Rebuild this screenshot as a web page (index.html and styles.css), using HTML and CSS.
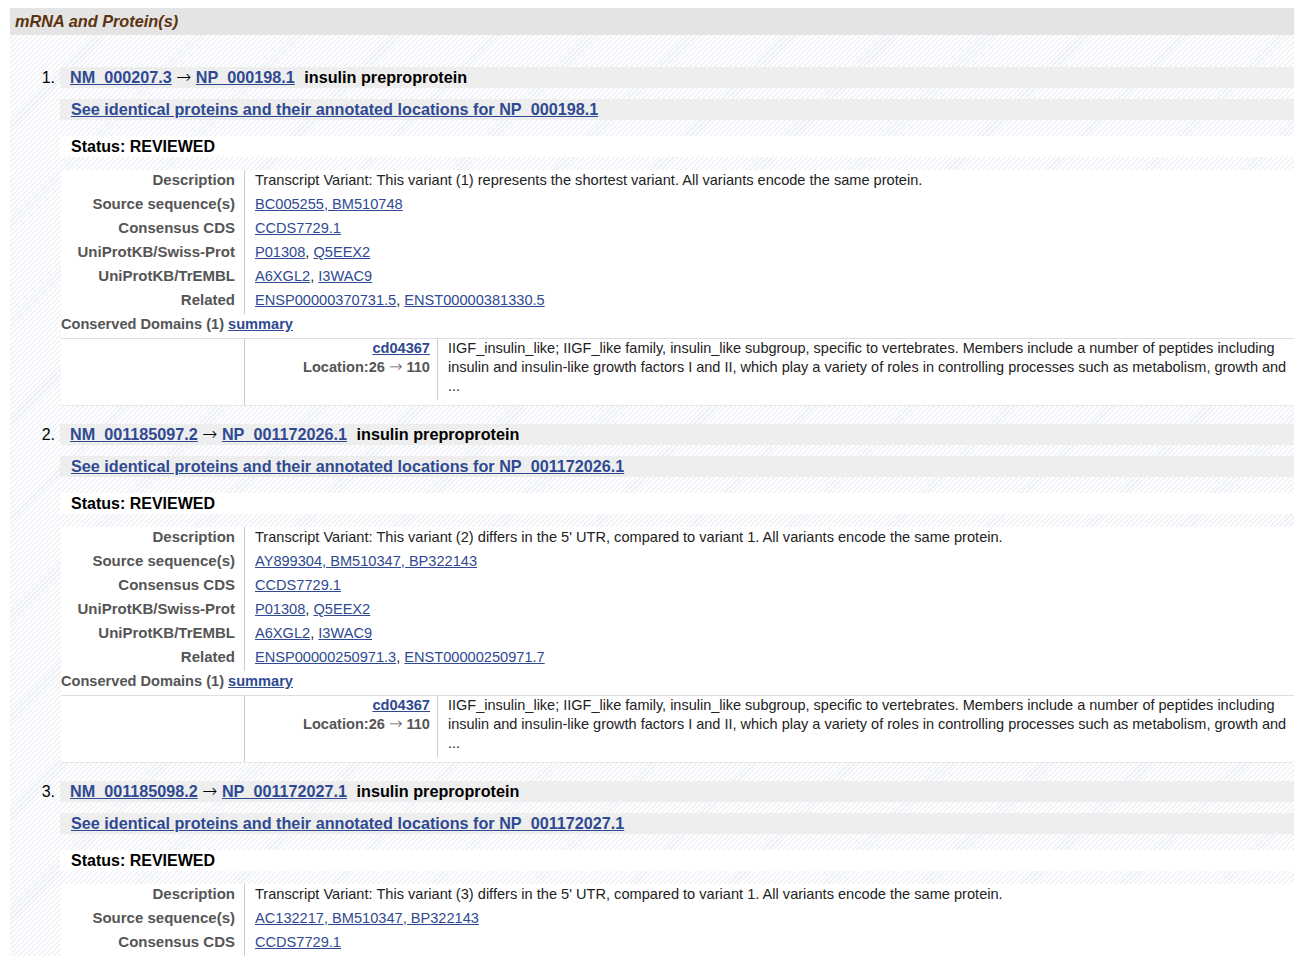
FILE: index.html
```html
<!DOCTYPE html>
<html>
<head>
<meta charset="utf-8">
<title>mRNA and Protein(s)</title>
<link rel="stylesheet" href="styles.css">
</head>
<body>
<div class="page">
  <div class="sec-head">mRNA and Protein(s)</div>
  <div class="sec-body">
    <ol class="items">
      <li class="item">
        <div class="num">1.</div>
        <div class="content">
          <div class="title"><a href="#">NM_000207.3</a> <span class="arr">→</span> <a href="#">NP_000198.1</a> <span class="name">insulin preproprotein</span></div>
          <div class="ident"><a href="#">See identical proteins and their annotated locations for NP_000198.1</a></div>
          <div class="status">Status: REVIEWED</div>
          <div class="panel">
            <div class="props">
              <div class="lbl">Description</div>
              <div class="val">Transcript Variant: This variant (1) represents the shortest variant. All variants encode the same protein.</div>
              <div class="lbl">Source sequence(s)</div>
              <div class="val"><a href="#">BC005255, BM510748</a></div>
              <div class="lbl">Consensus CDS</div>
              <div class="val"><a href="#">CCDS7729.1</a></div>
              <div class="lbl">UniProtKB/Swiss-Prot</div>
              <div class="val"><a href="#">P01308</a>, <a href="#">Q5EEX2</a></div>
              <div class="lbl">UniProtKB/TrEMBL</div>
              <div class="val"><a href="#">A6XGL2</a>, <a href="#">I3WAC9</a></div>
              <div class="lbl">Related</div>
              <div class="val"><a href="#">ENSP00000370731.5</a>, <a href="#">ENST00000381330.5</a></div>
            </div>
            <div class="cd-head">Conserved Domains (1) <a href="#">summary</a></div>
            <div class="cd">
              <div class="cd-blank"></div>
              <div class="cd-main">
                <div class="cd-row">
                  <div class="cd-id"><a href="#">cd04367</a><div>Location:26 <span class="arr-s">→</span> 110</div></div>
                  <div class="cd-desc"><span>IIGF_insulin_like; IIGF_like family, insulin_like subgroup, specific to vertebrates. Members include a number of peptides including</span><span>insulin and insulin-like growth factors I and II, which play a variety of roles in controlling processes such as metabolism, growth and</span><span>...</span></div>
                </div>
              </div>
            </div>
          </div>
        </div>
      </li>
      <li class="item">
        <div class="num">2.</div>
        <div class="content">
          <div class="title"><a href="#">NM_001185097.2</a> <span class="arr">→</span> <a href="#">NP_001172026.1</a> <span class="name">insulin preproprotein</span></div>
          <div class="ident"><a href="#">See identical proteins and their annotated locations for NP_001172026.1</a></div>
          <div class="status">Status: REVIEWED</div>
          <div class="panel">
            <div class="props">
              <div class="lbl">Description</div>
              <div class="val">Transcript Variant: This variant (2) differs in the 5' UTR, compared to variant 1. All variants encode the same protein.</div>
              <div class="lbl">Source sequence(s)</div>
              <div class="val"><a href="#">AY899304, BM510347, BP322143</a></div>
              <div class="lbl">Consensus CDS</div>
              <div class="val"><a href="#">CCDS7729.1</a></div>
              <div class="lbl">UniProtKB/Swiss-Prot</div>
              <div class="val"><a href="#">P01308</a>, <a href="#">Q5EEX2</a></div>
              <div class="lbl">UniProtKB/TrEMBL</div>
              <div class="val"><a href="#">A6XGL2</a>, <a href="#">I3WAC9</a></div>
              <div class="lbl">Related</div>
              <div class="val"><a href="#">ENSP00000250971.3</a>, <a href="#">ENST00000250971.7</a></div>
            </div>
            <div class="cd-head">Conserved Domains (1) <a href="#">summary</a></div>
            <div class="cd">
              <div class="cd-blank"></div>
              <div class="cd-main">
                <div class="cd-row">
                  <div class="cd-id"><a href="#">cd04367</a><div>Location:26 <span class="arr-s">→</span> 110</div></div>
                  <div class="cd-desc"><span>IIGF_insulin_like; IIGF_like family, insulin_like subgroup, specific to vertebrates. Members include a number of peptides including</span><span>insulin and insulin-like growth factors I and II, which play a variety of roles in controlling processes such as metabolism, growth and</span><span>...</span></div>
                </div>
              </div>
            </div>
          </div>
        </div>
      </li>
      <li class="item">
        <div class="num">3.</div>
        <div class="content">
          <div class="title"><a href="#">NM_001185098.2</a> <span class="arr">→</span> <a href="#">NP_001172027.1</a> <span class="name">insulin preproprotein</span></div>
          <div class="ident"><a href="#">See identical proteins and their annotated locations for NP_001172027.1</a></div>
          <div class="status">Status: REVIEWED</div>
          <div class="panel">
            <div class="props">
              <div class="lbl">Description</div>
              <div class="val">Transcript Variant: This variant (3) differs in the 5' UTR, compared to variant 1. All variants encode the same protein.</div>
              <div class="lbl">Source sequence(s)</div>
              <div class="val"><a href="#">AC132217, BM510347, BP322143</a></div>
              <div class="lbl">Consensus CDS</div>
              <div class="val"><a href="#">CCDS7729.1</a></div>
              <div class="lbl">UniProtKB/Swiss-Prot</div>
              <div class="val"><a href="#">P01308</a>, <a href="#">Q5EEX2</a></div>
              <div class="lbl">UniProtKB/TrEMBL</div>
              <div class="val"><a href="#">A6XGL2</a>, <a href="#">I3WAC9</a></div>
            </div>
          </div>
        </div>
      </li>
    </ol>
  </div>
</div>
</body>
</html>
```

FILE: styles.css
```css
body {
  margin: 0;
  background: #fff;
  font-family: "Liberation Sans", Arial, sans-serif;
  color: #000;
}

a {
  color: #2f4a92;
  text-decoration: underline;
}

.page {
  padding: 8px 0 0 10px;
}

.sec-head {
  height: 27px;
  line-height: 27px;
  padding-left: 5px;
  background: #e4e4e4;
  font-size: 16.3px;
  font-weight: bold;
  font-style: italic;
  color: #5a3310;
}

.sec-body {
  padding-top: 32px;
  background: repeating-linear-gradient(135deg, #ffffff 0 2px, #eef1f5 2px 3.5px);
}

.items {
  margin: 0;
  padding: 0;
  list-style: none;
}

.item {
  display: flex;
  margin-bottom: 18px;
}

.num {
  width: 50px;
  flex: none;
  box-sizing: border-box;
  padding-right: 5px;
  text-align: right;
  font-size: 16px;
  line-height: 21px;
}

.content {
  flex: 1;
  min-width: 0;
}

.title,
.ident,
.status {
  height: 21px;
  line-height: 21px;
  font-size: 16px;
  font-weight: bold;
  white-space: nowrap;
  overflow: hidden;
}

.title,
.ident {
  font-size: 16.2px;
}

.title {
  background: #eeeeee;
  padding-left: 10px;
}

.arr {
  font-family: "DejaVu Sans", sans-serif;
  font-weight: 200;
  font-size: 18px;
  line-height: 1;
}

.arr-s {
  font-family: "DejaVu Sans", sans-serif;
  font-weight: 200;
  font-size: 16px;
  line-height: 1;
}

.title .name {
  margin-left: 5px;
}

.ident {
  margin-top: 11px;
  background: #eeeeee;
  padding-left: 11px;
}

.status {
  margin-top: 16px;
  background: #fff;
  padding-left: 11px;
}

.panel {
  margin-top: 13px;
  margin-left: 1px;
  background: #fff;
  font-size: 14.6px;
}

.props {
  display: grid;
  grid-template-columns: 184px 1fr;
}

.lbl {
  padding: 0 9px 4px 0;
  line-height: 20px;
  text-align: right;
  border-right: 1px solid #cccccc;
  font-size: 15px;
  font-weight: bold;
  color: #555;
  white-space: nowrap;
}

.val {
  padding: 0 0 4px 10px;
  line-height: 20px;
  color: #222;
  white-space: nowrap;
}

.cd-head {
  line-height: 20px;
  padding-bottom: 4px;
  font-weight: bold;
  color: #555;
}

.cd {
  display: flex;
  border-top: 1px solid #dddddd;
  border-bottom: 1px solid #e8e8e8;
}

.cd-blank {
  width: 184px;
  flex: none;
  box-sizing: border-box;
  border-right: 1px solid #cccccc;
}

.cd-main {
  flex: 1;
  min-width: 0;
  padding-bottom: 5px;
}

.cd-row {
  display: flex;
}

.cd-id {
  width: 193px;
  flex: none;
  box-sizing: border-box;
  padding-right: 7px;
  text-align: right;
  border-right: 1px solid #cccccc;
  line-height: 19px;
  font-weight: bold;
  color: #555;
}

.cd-desc {
  flex: 1;
  min-width: 0;
  padding: 0 0 4px 10px;
  line-height: 19px;
  font-size: 14.5px;
  color: #222;
  white-space: nowrap;
  overflow: hidden;
}

.cd-desc span {
  display: block;
}
```
